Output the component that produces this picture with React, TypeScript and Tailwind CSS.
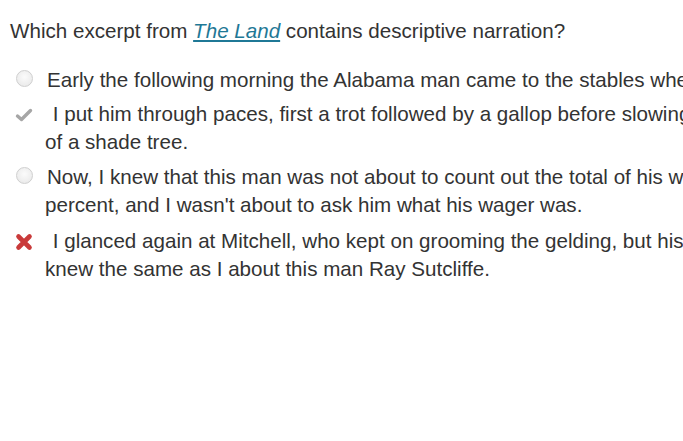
import React from "react";

const font = { fontFamily: '"Liberation Sans", Arial, sans-serif' };

function Radio() {
  return (
    <span className="block w-[17px] h-[17px] rounded-full border border-[#cfcfcf] bg-[radial-gradient(circle_at_50%_40%,#fbfbfb,#e6e6e6)]" />
  );
}

function Check() {
  return (
    <svg width="20" height="16" viewBox="0 0 20 16">
      <path d="M3.5 9 L7.5 12.5 L16.5 3.5" fill="none" stroke="#a6a6a6" strokeWidth="3.4" strokeLinecap="round" strokeLinejoin="round" />
    </svg>
  );
}

function Cross() {
  return (
    <svg width="20" height="18" viewBox="0 0 20 18">
      <path d="M4.5 3.5 L15.5 14.5 M15.5 3.5 L4.5 14.5" fill="none" stroke="#c93a3a" strokeWidth="4.6" strokeLinecap="round" />
    </svg>
  );
}

function Item({ icon, children, mt, iconMt }: { icon: React.ReactNode; children: React.ReactNode; mt: string; iconMt: string }) {
  return (
    <div className={`flex ${mt}`}>
      <div className={`w-[45px] shrink-0 flex justify-center pl-[3px] ${iconMt}`}>{icon}</div>
      <div className="whitespace-nowrap text-[20.6px] leading-[28px] text-[#333333] indent-[2px]">{children}</div>
    </div>
  );
}

export default function App() {
  return (
    <div className="w-full h-[441px] overflow-hidden bg-white" style={font}>
      <div className="pt-[17px] pl-[10px] text-[20.6px] leading-[28px] text-[#333333] whitespace-nowrap">
        Which excerpt from <a className="italic underline text-[#1f7896]">The Land</a> contains descriptive narration?
      </div>
      <Item icon={<Radio />} mt="mt-[21px]" iconMt="mt-[4px]">
        Early the following morning the Alabama man came to the stables where Mitchell and I were working.
      </Item>
      <Item icon={<Check />} mt="mt-[6px]" iconMt="mt-[7px]">
        {"\u00a0"}I put him through paces, first a trot followed by a gallop before slowing him to a walk under the cool
        <br />
        of a shade tree.
      </Item>
      <Item icon={<Radio />} mt="mt-[7px]" iconMt="mt-[4px]">
        Now, I knew that this man was not about to count out the total of his wager to us for our ten
        <br />
        percent, and I wasn't about to ask him what his wager was.
      </Item>
      <Item icon={<Cross />} mt="mt-[8px]" iconMt="mt-[6px]">
        {"\u00a0"}I glanced again at Mitchell, who kept on grooming the gelding, but his eyes told me he
        <br />
        knew the same as I about this man Ray Sutcliffe.
      </Item>
    </div>
  );
}
